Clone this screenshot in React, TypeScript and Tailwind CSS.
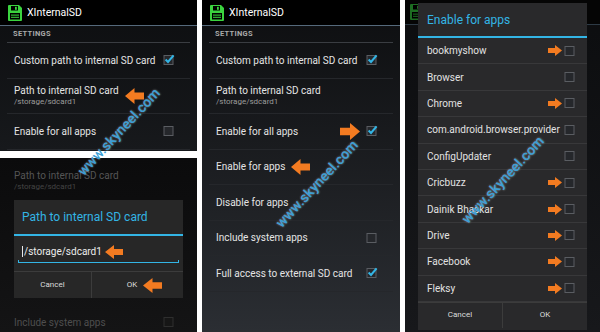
import React from "react";

const BLUE = "#33b5e5";

function Floppy({ dim }: { dim?: boolean }) {
  const g = dim ? "#1d6e22" : "#3bd43f";
  return (
    <svg width="14" height="16" viewBox="0 0 14 16" className="shrink-0">
      <path d="M0 1 Q0 0 1 0 H11 L14 3 V15 Q14 16 13 16 H1 Q0 16 0 15 Z" fill={g} />
      <rect x="3" y="1" width="7" height="4.5" fill="#000" />
      <rect x="7" y="1.8" width="1.8" height="3" fill={g} />
      <rect x="2" y="8" width="10" height="6.5" fill="#000" />
      <rect x="3" y="9.6" width="8" height="1" fill={g} />
      <rect x="3" y="11.8" width="8" height="1" fill={g} />
    </svg>
  );
}

function Box({ checked, dim }: { checked?: boolean; dim?: boolean }) {
  return (
    <svg width="12" height="12" viewBox="0 0 12 12" className="shrink-0 overflow-visible">
      <rect x="1" y="1.5" width="9" height="9" fill={dim ? "#161616" : "#25272b"} stroke={dim ? "#2e2e2e" : "#5a5d62"} strokeWidth="1" />
      {checked && <path d="M2.6 5.6 L5 8 L10.6 1.4" stroke={BLUE} strokeWidth="2.1" fill="none" />}
    </svg>
  );
}

function Arrow({ left, w = 20, h = 16 }: { left?: boolean; w?: number; h?: number }) {
  const pts = left
    ? "20,4.5 10,4.5 10,0 0,8 10,16 10,11.5 20,11.5"
    : "0,4.5 10,4.5 10,0 20,8 10,16 10,11.5 0,11.5";
  return (
    <svg width={w} height={h} viewBox="0 0 20 16" preserveAspectRatio="none" className="shrink-0">
      <polygon points={pts} fill="#f37b21" />
    </svg>
  );
}

function ActionBar() {
  return (
    <div className="h-[26px] shrink-0 bg-black border-b border-[#55697b] flex items-center gap-[5px] pl-[8px]">
      <Floppy />
      <span className="text-[10.5px] text-white">XInternalSD</span>
    </div>
  );
}

type RowProps = {
  title: string;
  sub?: string;
  check?: boolean;
  arrow?: "text" | "box";
};

function Row({ title, sub, check, arrow }: RowProps) {
  return (
    <div className="h-[35.5px] shrink-0 mx-[7px] border-b border-[#25272b] flex items-center pl-[7px] pr-[15px]">
      <div className="flex flex-col">
        <span className="text-[10px] leading-[13px] text-[#e4e4e4]">{title}</span>
        {sub && <span className="text-[8px] leading-[10px] text-[#9c9c9c]">{sub}</span>}
      </div>
      {arrow === "text" && (
        <div className="ml-[6px]">
          <Arrow left w={19} h={16} />
        </div>
      )}
      <div className="flex-1" />
      {arrow === "box" && (
        <div className="mr-[6px]">
          <Arrow w={20} h={17} />
        </div>
      )}
      {check !== undefined && <Box checked={check} />}
    </div>
  );
}

function SettingsHeader() {
  return (
    <div className="h-[17px] shrink-0 mx-[7px] border-b border-[#3a3d42] flex items-center pl-[6px]">
      <span className="text-[7.5px] font-bold tracking-[0.3px] text-[#a9a9a9]">SETTINGS</span>
    </div>
  );
}

function Watermark({ x, y }: { x: number; y: number }) {
  return (
    <span
      className="absolute -translate-x-1/2 -translate-y-1/2 -rotate-[47deg] whitespace-nowrap text-[14px] font-medium text-[#3b9fd6] [text-shadow:0_0_2px_rgba(255,255,255,0.55)] pointer-events-none"
      style={{ left: x, top: y }}
    >
      www.skyneel.com
    </span>
  );
}

const apps: { name: string; mark?: boolean }[] = [
  { name: "bookmyshow", mark: true },
  { name: "Browser" },
  { name: "Chrome", mark: true },
  { name: "com.android.browser.provider" },
  { name: "ConfigUpdater" },
  { name: "Cricbuzz", mark: true },
  { name: "Dainik Bhaskar", mark: true },
  { name: "Drive", mark: true },
  { name: "Facebook", mark: true },
  { name: "Fleksy", mark: true },
];

function DialogButtons() {
  return (
    <div className="h-[26px] shrink-0 border-t border-[#3c3c3c] flex text-[8px] text-[#dcdcdc]">
      <div className="flex-1 flex items-center justify-center border-r border-[#3c3c3c]">Cancel</div>
      <div className="flex-1 flex items-center justify-center">OK</div>
    </div>
  );
}

export default function App() {
  return (
    <div className="relative w-[600px] h-[332px] bg-white flex overflow-hidden font-['Roboto',sans-serif]">
      {/* left column */}
      <div className="w-[197px] flex flex-col gap-[7px] shrink-0">
        <div className="h-[151px] flex flex-col overflow-hidden bg-linear-to-b from-[#0d0e10] to-[#17191c]">
          <ActionBar />
          <SettingsHeader />
          <Row title="Custom path to internal SD card" check />
          <Row title="Path to internal SD card" sub="/storage/sdcard1" arrow="text" />
          <Row title="Enable for all apps" check={false} />
        </div>

        <div className="relative flex-1 overflow-hidden bg-linear-to-b from-[#0b0b0c] to-[#141415]">
          <div className="pt-[4px] flex flex-col">
            <div className="h-[36px] mx-[7px] pl-[7px] flex flex-col justify-center">
              <span className="text-[10px] leading-[13px] text-[#555]">Path to internal SD card</span>
              <span className="text-[8px] leading-[10px] text-[#444]">/storage/sdcard1</span>
            </div>
            <div className="h-[106px]" />
            <div className="h-[36px] mx-[7px] pl-[7px] pr-[15px] flex items-center justify-between">
              <span className="text-[10px] text-[#4e4e4e]">Include system apps</span>
              <Box dim />
            </div>
          </div>

          <div className="absolute left-[14px] top-[42px] w-[169px] h-[98px] bg-[#272727] flex flex-col">
            <div className="h-[36px] shrink-0 border-b-2 border-[#33b5e5] flex items-center pl-[8px]">
              <span className="text-[12px] text-[#33b5e5]">Path to internal SD card</span>
            </div>
            <div className="flex-1 flex flex-col justify-center px-[4px]">
              <div className="flex items-center pl-[4px] h-[14px]">
                <div className="w-px h-[11px] bg-[#e8e8e8]" />
                <span className="text-[10px] text-[#ececec] ml-px">/storage/sdcard1</span>
                <div className="ml-[3px]">
                  <Arrow left w={18} h={14} />
                </div>
              </div>
              <div className="h-[3px] border-b border-l border-r border-[#33b5e5] mt-[1px]" />
            </div>
            <div className="h-[27px] shrink-0 border-t border-[#3c3c3c] flex text-[8px] text-[#dcdcdc]">
              <div className="flex-1 flex items-center justify-center border-r border-[#3c3c3c]">Cancel</div>
              <div className="flex-1 flex items-center justify-center gap-[6px] pl-[14px]">
                <span>OK</span>
                <Arrow left w={19} h={15} />
              </div>
            </div>
          </div>
        </div>
      </div>

      {/* middle panel */}
      <div className="ml-[5px] w-[198px] shrink-0 flex flex-col bg-linear-to-b from-[#0d0e10] to-[#2b2e33]">
        <ActionBar />
        <SettingsHeader />
        <Row title="Custom path to internal SD card" check />
        <Row title="Path to internal SD card" sub="/storage/sdcard1" />
        <Row title="Enable for all apps" check arrow="box" />
        <Row title="Enable for apps" arrow="text" />
        <Row title="Disable for apps" />
        <Row title="Include system apps" check={false} />
        <Row title="Full access to external SD card" check />
      </div>

      {/* right panel */}
      <div className="relative ml-[5px] flex-1 flex flex-col bg-linear-to-b from-[#0c0d0f] to-[#17181b]">
        <div className="h-[25px] shrink-0 bg-[#050505] border-b border-[#2d3a45] flex items-center pl-[5px]">
          <Floppy dim />
        </div>
        <div className="absolute left-[13px] top-[3px] w-[169px] h-[327px] bg-[#29292b] flex flex-col">
          <div className="h-[35px] shrink-0 border-b-2 border-[#33b5e5] flex items-center pl-[9px]">
            <span className="text-[12px] text-[#33b5e5]">Enable for apps</span>
          </div>
          {apps.map((a) => (
            <div
              key={a.name}
              className="h-[26.4px] shrink-0 border-b border-[#38383a] flex items-center pl-[9px] pr-[11px]"
            >
              <span className="text-[10px] text-[#e2e2e2] whitespace-nowrap">{a.name}</span>
              <div className="flex-1" />
              {a.mark && (
                <div className="mr-[2px]">
                  <Arrow w={14} h={11} />
                </div>
              )}
              <Box />
            </div>
          ))}
          <DialogButtons />
        </div>
      </div>

      <Watermark x={119} y={132} />
      <Watermark x={317} y={184} />
      <Watermark x={503} y={180} />
    </div>
  );
}
